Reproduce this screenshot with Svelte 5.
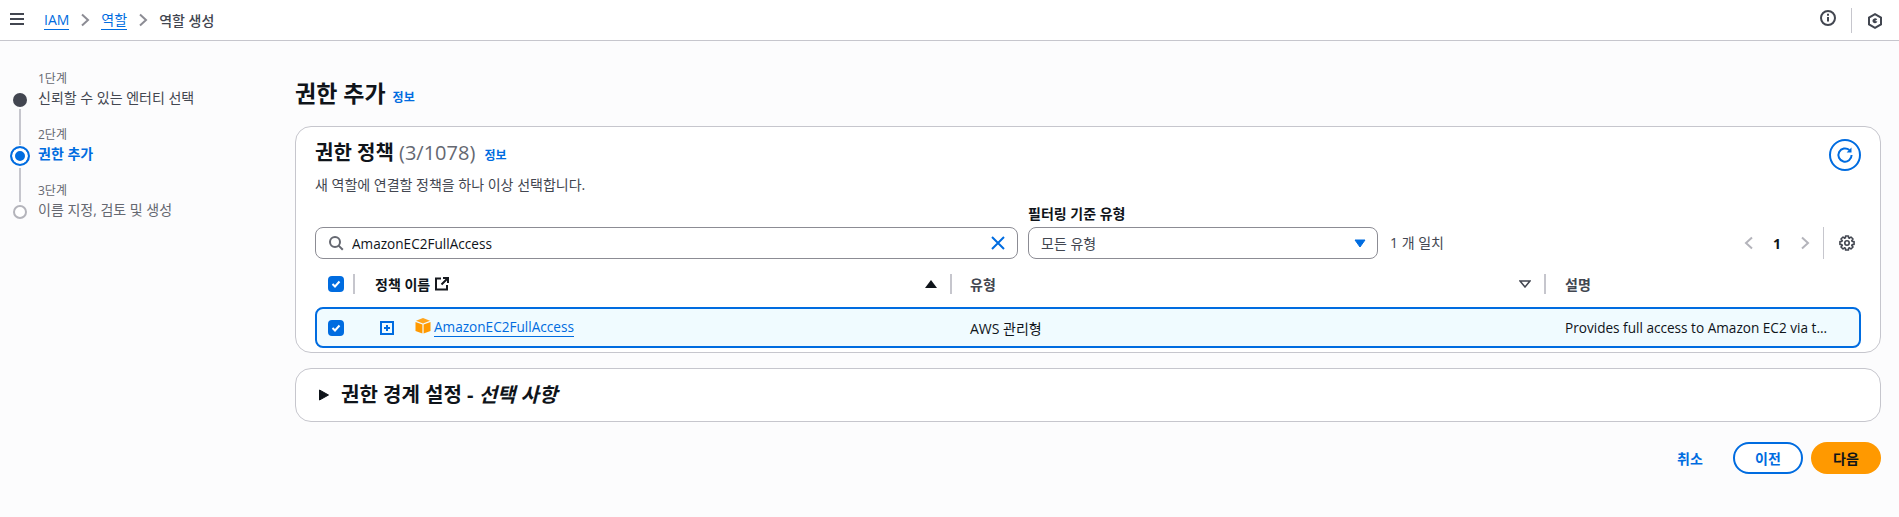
<script>
  const steps = [
    { no: '1단계', label: '신뢰할 수 있는 엔터티 선택', state: 'done' },
    { no: '2단계', label: '권한 추가', state: 'active' },
    { no: '3단계', label: '이름 지정, 검토 및 생성', state: 'todo' }
  ];
  let query = $state('AmazonEC2FullAccess');

  // settings icon outline, 8 teeth
  const gear = (() => {
    const pts = [];
    for (let i = 0; i < 8; i++) {
      const a = (i * Math.PI) / 4 - Math.PI / 2;
      for (const [d, r] of [[-0.3, 5.4], [-0.2, 7.2], [0.2, 7.2], [0.3, 5.4]]) {
        pts.push(`${(8 + r * Math.cos(a + d)).toFixed(2)} ${(8 + r * Math.sin(a + d)).toFixed(2)}`);
      }
    }
    return 'M' + pts.join('L') + 'Z';
  })();
</script>

<div class="page">
  <header class="topbar">
    <button class="menu" aria-label="menu">
      <svg width="16" height="14" viewBox="0 0 16 14"><path d="M1 2h14M1 7h14M1 12h14" stroke="#424650" stroke-width="2" fill="none"/></svg>
    </button>
    <nav class="crumbs">
      <a href="#iam">IAM</a>
      <svg width="10" height="14" viewBox="0 0 10 14"><path d="M2 1.5 8 7l-6 5.5" stroke="#8c8c94" stroke-width="2" fill="none"/></svg>
      <a href="#role">역할</a>
      <svg width="10" height="14" viewBox="0 0 10 14"><path d="M2 1.5 8 7l-6 5.5" stroke="#8c8c94" stroke-width="2" fill="none"/></svg>
      <span>역할 생성</span>
    </nav>
    <div class="top-right">
      <svg class="info-icon" width="16" height="16" viewBox="0 0 16 16"><circle cx="8" cy="8" r="7" stroke="#424650" stroke-width="2" fill="none"/><path d="M8 7v4.5" stroke="#424650" stroke-width="2"/><path d="M8 3.8v2" stroke="#424650" stroke-width="2"/></svg>
      <span class="top-div"></span>
      <svg class="hex-icon" width="16" height="16" viewBox="0 0 16 16"><path d="M8 1.2 14 4.6v6.8L8 14.8 2 11.4V4.6z" stroke="#424650" stroke-width="2" fill="none"/><path d="M5.4 8a2.6 2.6 0 0 1 4.8-1.4L8 8l2.4.6A2.6 2.6 0 0 1 5.4 8z" fill="#424650"/></svg>
    </div>
  </header>

  <div class="body">
    <aside class="steps">
      {#each steps as s, i}
        <div class="step {s.state}">
          <div class="track">
            <span class="dot"></span>
            {#if i < steps.length - 1}<span class="line"></span>{/if}
          </div>
          <div class="step-text">
            <div class="no">{s.no}</div>
            <div class="label">{s.label}</div>
          </div>
        </div>
      {/each}
    </aside>

    <main class="content">
      <h1>권한 추가 <a class="info" href="#info">정보</a></h1>

      <section class="card">
        <div class="card-head">
          <div>
            <h2>권한 정책 <span class="count">(3/1078)</span> <a class="info" href="#info">정보</a></h2>
            <p>새 역할에 연결할 정책을 하나 이상 선택합니다.</p>
          </div>
          <button class="refresh" aria-label="refresh">
            <svg width="18" height="18" viewBox="0 0 18 18"><path d="M15.6 9a6.6 6.6 0 1 1-2.2-4.9" stroke="#006ce0" stroke-width="2" fill="none"/><path d="M15.5 1.6v4.9h-4.9z" fill="#006ce0"/></svg>
          </button>
        </div>

        <div class="filters">
          <div class="search">
            <svg width="16" height="16" viewBox="0 0 16 16"><circle cx="7" cy="7" r="5" stroke="#656871" stroke-width="2" fill="none"/><path d="m10.6 10.6 4.2 4.2" stroke="#656871" stroke-width="2"/></svg>
            <input bind:value={query} />
            <svg width="16" height="16" viewBox="0 0 16 16"><path d="m2 2 12 12M14 2 2 14" stroke="#006ce0" stroke-width="2" fill="none"/></svg>
          </div>
          <div class="type-filter">
            <div class="filter-label">필터링 기준 유형</div>
            <div class="select">
              <span>모든 유형</span>
              <svg width="12" height="9" viewBox="0 0 12 9"><path d="M1 1h10L6 8z" fill="#006ce0" stroke="#006ce0"/></svg>
            </div>
          </div>
          <div class="matches">1 개 일치</div>
          <div class="pager">
            <svg width="10" height="14" viewBox="0 0 10 14"><path d="M8 1.5 2 7l6 5.5" stroke="#b4b4bb" stroke-width="2" fill="none"/></svg>
            <b>1</b>
            <svg width="10" height="14" viewBox="0 0 10 14"><path d="M2 1.5 8 7l-6 5.5" stroke="#b4b4bb" stroke-width="2" fill="none"/></svg>
            <span class="pager-div"></span>
            <svg width="16" height="16" viewBox="0 0 16 16"><path d={gear} stroke="#424650" stroke-width="1.6" stroke-linejoin="round" fill="none"/><circle cx="8" cy="8" r="2.2" stroke="#424650" stroke-width="1.6" fill="none"/></svg>
          </div>
        </div>

        <div class="thead">
          <div class="cell-check">
            <span class="check"><svg width="10" height="10" viewBox="0 0 10 10"><path d="m1.5 5 2.5 2.5 4.5-5" stroke="#fff" stroke-width="2" fill="none"/></svg></span>
            <span class="col-div"></span>
          </div>
          <div class="th name">
            <span>정책 이름</span>
            <svg class="ext" width="14" height="14" viewBox="0 0 14 14"><path d="M6 1.5H1v11h11V8" stroke="#16191f" stroke-width="2" fill="none"/><path d="M8 1h5v5M13 1 6.5 7.5" stroke="#16191f" stroke-width="2" fill="none"/></svg>
            <svg class="sort" width="12" height="8" viewBox="0 0 12 8"><path d="M6 0l6 8H0z" fill="#0f141a"/></svg>
            <span class="col-div"></span>
          </div>
          <div class="th type">
            <span>유형</span>
            <svg class="sort" width="12" height="8" viewBox="0 0 12 8"><path d="M1 1h10L6 7z" fill="none" stroke="#424650" stroke-width="1.5"/></svg>
            <span class="col-div"></span>
          </div>
          <div class="th desc">설명</div>
        </div>

        <div class="row">
          <div class="cell-check">
            <span class="check"><svg width="10" height="10" viewBox="0 0 10 10"><path d="m1.5 5 2.5 2.5 4.5-5" stroke="#fff" stroke-width="2" fill="none"/></svg></span>
          </div>
          <div class="name-cell">
            <svg class="plus" width="14" height="14" viewBox="0 0 14 14"><rect x="1" y="1" width="12" height="12" fill="none" stroke="#006ce0" stroke-width="2"/><path d="M7 4v6M4 7h6" stroke="#006ce0" stroke-width="2"/></svg>
            <svg class="cube" width="16" height="16" viewBox="0 0 16 16"><path d="M8 0 15 2.8 8 5.4 1 2.8z" fill="#ffa41c"/><path d="M.5 4 7.4 6.6V15.6L.5 13z" fill="#ff9900"/><path d="M15.5 4 8.6 6.6V15.6l6.9-2.6z" fill="#ff9900"/></svg>
            <a href="#policy">AmazonEC2FullAccess</a>
          </div>
          <div class="type-cell">AWS 관리형</div>
          <div class="desc-cell">Provides full access to Amazon EC2 via the AWS Management Console.</div>
        </div>
      </section>

      <section class="boundary">
        <svg width="12" height="12" viewBox="0 0 12 12"><path d="M1.5 1v10L10.5 6z" fill="#0f141a" stroke="#0f141a"/></svg>
        <h3>권한 경계 설정 - <em>선택 사항</em></h3>
      </section>

      <div class="actions">
        <button class="link">취소</button>
        <button class="outline">이전</button>
        <button class="primary">다음</button>
      </div>
    </main>
  </div>
</div>

<style>
  :global(body) {
    margin: 0;
    background: #fcfcfd;
    font-family: "Open Sans", "Noto Sans CJK KR", sans-serif;
    color: #0f141a;
  }
  a { color: #006ce0; text-decoration: none; }
  button { font-family: inherit; border: none; background: none; padding: 0; }
  svg { flex-shrink: 0; display: block; }

  .page { height: 517px; overflow: hidden; }

  .topbar {
    height: 40px;
    background: #fff;
    border-bottom: 1px solid #c6c6cd;
    display: flex;
    align-items: center;
    padding: 0 16px 0 9px;
    font-size: 14px;
  }
  .menu { display: flex; margin-right: 19px; margin-top: -2px; }
  .crumbs { display: flex; align-items: center; gap: 11px; color: #424650; font-weight: 500; }
  .crumbs a { border-bottom: 1px solid #006ce0; line-height: 19px; font-weight: 400; }
  .crumbs span { line-height: 19px; }
  .top-right { margin-left: auto; display: flex; align-items: center; gap: 15px; }
  .top-div { width: 1px; height: 25px; background: #c6c6cd; }
  .info-icon { margin-bottom: 4px; }
  .hex-icon { margin-top: 2px; }

  .body { display: grid; grid-template-columns: 295px 1fr; }

  .steps { padding: 27px 0 0 10px; }
  .step { display: flex; gap: 8px; height: 56px; }
  .track { width: 20px; position: relative; }
  .dot {
    position: absolute; left: 3px; top: 25px;
    width: 14px; height: 14px; border-radius: 50%; box-sizing: border-box;
  }
  .line { position: absolute; left: 9px; top: 41px; width: 2px; height: 36px; background: #c6c6cd; }
  .done .dot { background: #424650; }
  .active .dot { left: 0; top: 22px; width: 20px; height: 20px; border: 2px solid #006ce0; background: #006ce0; box-shadow: inset 0 0 0 3px #fff; }
  .active .line { top: 44px; height: 34px; }
  .todo .dot { background: #fff; border: 2px solid #b4b4bb; }
  .no { font-size: 12px; line-height: 16px; color: #656871; margin-top: 3px; }
  .label { font-size: 14px; line-height: 20px; color: #424650; margin-top: 1px; }
  .active .label { color: #006ce0; font-weight: 700; }
  .todo .label { color: #656871; }

  .content { padding: 35px 18px 0 0; }
  h1 { margin: 0 0 11px; font-size: 23px; line-height: 34px; font-weight: 700; }
  .info { font-size: 12px; font-weight: 700; margin-left: 1px; }

  .card {
    background: #fff;
    border: 1px solid #c6c6cd;
    border-radius: 16px;
    height: 227px;
    padding: 12px 19px 0;
    box-sizing: border-box;
    overflow: hidden;
  }
  .card-head { display: flex; justify-content: space-between; height: 54px; }
  h2 { margin: 0; font-size: 20px; line-height: 28px; font-weight: 700; }
  .count { font-weight: 400; color: #656871; }
  .card-head .info { margin-left: 4px; }
  .card-head p { margin: 6px 0 0; font-size: 14px; line-height: 18px; color: #424650; }
  .refresh {
    width: 32px; height: 32px; border: 2px solid #006ce0; border-radius: 50%;
    box-sizing: border-box; display: flex; align-items: center; justify-content: center;
  }

  .filters { display: flex; align-items: flex-end; margin-top: 13px; height: 53px; }
  .search {
    width: 703px; height: 32px; box-sizing: border-box;
    border: 1px solid #8c8c94; border-radius: 8px; background: #fff;
    display: flex; align-items: center; padding: 0 11px 0 12px; gap: 8px;
  }
  .search input {
    flex: 1; border: none; outline: none; background: none; min-width: 0;
    font: inherit; font-size: 13.6px; color: #0f141a; padding: 0;
  }
  .type-filter { margin-left: 10px; width: 350px; }
  .filter-label { font-size: 14px; line-height: 15px; font-weight: 700; color: #0f141a; margin-bottom: 6px; }
  .select {
    height: 32px; box-sizing: border-box;
    border: 1px solid #8c8c94; border-radius: 8px; background: #fff;
    display: flex; align-items: center; justify-content: space-between;
    padding: 0 11px 0 12px; font-size: 14px; color: #424650;
  }
  .matches { margin-left: 12px; font-size: 14px; line-height: 32px; color: #424650; }
  .pager { margin-left: auto; display: flex; align-items: center; height: 32px; padding-right: 6px; }
  .pager b { font-size: 14px; margin: 0 19px; }
  .pager-div { width: 1px; height: 32px; background: #c6c6cd; margin: 0 15px 0 13px; }

  .thead { display: grid; grid-template-columns: 50px 605px 595px 1fr; height: 46px; margin-top: 2px; align-items: center; }
  .cell-check { display: flex; align-items: center; padding-left: 13px; }
  .check {
    width: 16px; height: 16px; background: #006ce0; border-radius: 4px;
    display: flex; align-items: center; justify-content: center;
  }
  .col-div { width: 2px; height: 20px; background: #c6c6cd; }
  .cell-check .col-div { margin-left: 9px; }
  .th { font-size: 14px; font-weight: 700; color: #424650; display: flex; align-items: center; }
  .th.name { color: #0f141a; padding: 0 18px 0 10px; }
  .th.type { padding-right: 19px; }
  .ext { margin-left: 5px; }
  .th .sort { margin-left: auto; margin-right: 13px; }
  .row {
    display: grid; grid-template-columns: 48px 605px 595px minmax(0, 1fr);
    height: 41px; align-items: center; box-sizing: border-box;
    background: #f0fbff; border: 2px solid #006ce0; border-radius: 8px;
    font-size: 14px; color: #0f141a;
  }
  .row .cell-check { padding-left: 11px; }
  .name-cell { display: flex; align-items: center; padding-left: 15px; }
  .plus { margin-right: 21px; }
  .cube { margin-right: 3px; margin-top: -3px; }
  .name-cell a { border-bottom: 1px solid #006ce0; line-height: 18px; font-size: 13.6px; }
  .desc-cell { white-space: nowrap; overflow: hidden; text-overflow: ellipsis; padding-right: 24px; font-size: 13.6px; }

  .boundary {
    margin-top: 15px; height: 54px; box-sizing: border-box;
    background: #fff; border: 1px solid #c6c6cd; border-radius: 16px;
    display: flex; align-items: center; padding-left: 22px; gap: 11px;
  }
  h3 { margin: 0; font-size: 20px; font-weight: 700; line-height: 24px; }

  .actions { display: flex; justify-content: flex-end; align-items: center; margin-top: 20px; }
  .actions button {
    height: 32px; box-sizing: border-box; border-radius: 16px;
    font-size: 14px; font-weight: 700; width: 70px;
  }
  .actions .link { color: #006ce0; margin-right: 17px; width: 52px; }
  .outline { border: 2px solid #006ce0; background: #fff; color: #006ce0; margin-right: 8px; }
  .primary { background: #ff9900; color: #0f141a; }
</style>
